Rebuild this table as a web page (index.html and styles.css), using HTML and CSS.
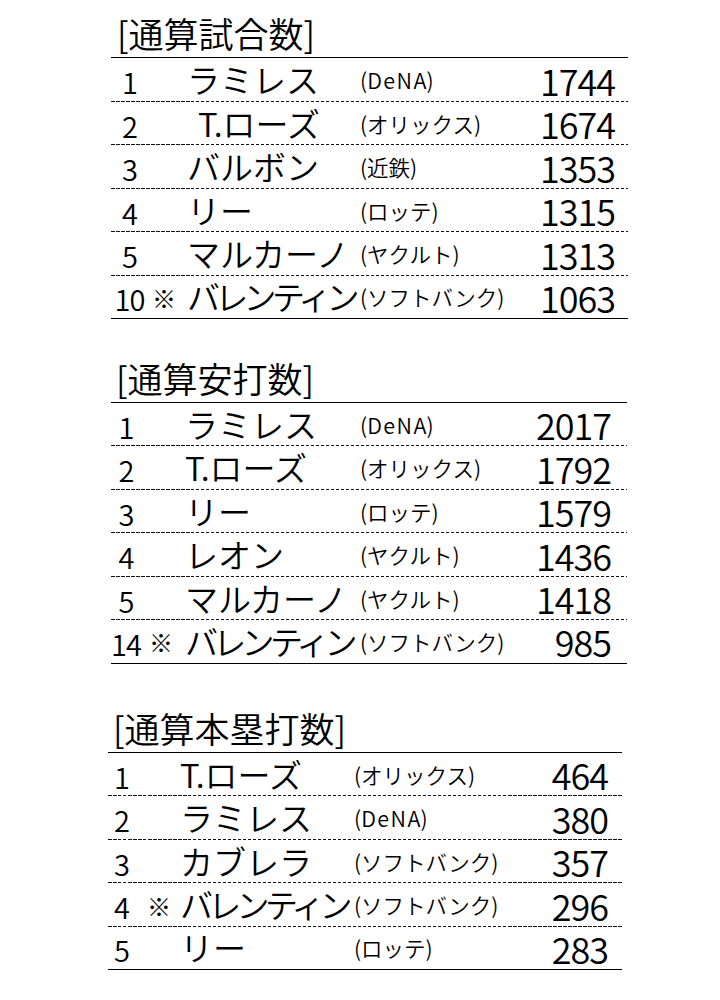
FILE: index.html
```html
<!DOCTYPE html>
<html lang="ja">
<head>
<meta charset="utf-8">
<title>通算記録</title>
<link rel="stylesheet" href="styles.css">
</head>
<body>
<main class="page">
  <section class="board s1">
    <h2 class="title">[通算試合数]</h2>
    <div class="row"><span class="rank">1</span><span class="mark"></span><span class="name">ラミレス</span><span class="team">(<span class="en">DeNA</span>)</span><span class="num">1744</span></div>
    <div class="row"><span class="rank">2</span><span class="mark"></span><span class="name indent">T.ローズ</span><span class="team">(オリックス)</span><span class="num">1674</span></div>
    <div class="row"><span class="rank">3</span><span class="mark"></span><span class="name">バルボン</span><span class="team">(近鉄)</span><span class="num">1353</span></div>
    <div class="row"><span class="rank">4</span><span class="mark"></span><span class="name">リー</span><span class="team">(ロッテ)</span><span class="num">1315</span></div>
    <div class="row"><span class="rank">5</span><span class="mark"></span><span class="name">マルカーノ</span><span class="team">(ヤクルト)</span><span class="num">1313</span></div>
    <div class="row last"><span class="rank">10</span><span class="mark">※</span><span class="name squeeze">バレンティン</span><span class="team">(ソフトバンク)</span><span class="num">1063</span></div>
  </section>

  <section class="board s2">
    <h2 class="title">[通算安打数]</h2>
    <div class="row"><span class="rank">1</span><span class="mark"></span><span class="name">ラミレス</span><span class="team">(<span class="en">DeNA</span>)</span><span class="num">2017</span></div>
    <div class="row"><span class="rank">2</span><span class="mark"></span><span class="name">T.ローズ</span><span class="team">(オリックス)</span><span class="num">1792</span></div>
    <div class="row"><span class="rank">3</span><span class="mark"></span><span class="name">リー</span><span class="team">(ロッテ)</span><span class="num">1579</span></div>
    <div class="row"><span class="rank">4</span><span class="mark"></span><span class="name">レオン</span><span class="team">(ヤクルト)</span><span class="num">1436</span></div>
    <div class="row"><span class="rank">5</span><span class="mark"></span><span class="name">マルカーノ</span><span class="team">(ヤクルト)</span><span class="num">1418</span></div>
    <div class="row last"><span class="rank">14</span><span class="mark">※</span><span class="name squeeze">バレンティン</span><span class="team">(ソフトバンク)</span><span class="num">985</span></div>
  </section>

  <section class="board s3">
    <h2 class="title">[通算本塁打数]</h2>
    <div class="row"><span class="rank">1</span><span class="mark"></span><span class="name">T.ローズ</span><span class="team">(オリックス)</span><span class="num">464</span></div>
    <div class="row"><span class="rank">2</span><span class="mark"></span><span class="name">ラミレス</span><span class="team">(<span class="en">DeNA</span>)</span><span class="num">380</span></div>
    <div class="row"><span class="rank">3</span><span class="mark"></span><span class="name">カブレラ</span><span class="team">(ソフトバンク)</span><span class="num">357</span></div>
    <div class="row"><span class="rank">4</span><span class="mark">※</span><span class="name squeeze">バレンティン</span><span class="team">(ソフトバンク)</span><span class="num">296</span></div>
    <div class="row last"><span class="rank">5</span><span class="mark"></span><span class="name">リー</span><span class="team">(ロッテ)</span><span class="num">283</span></div>
  </section>
</main>
</body>
</html>
```

FILE: styles.css
```css
html, body {
  margin: 0;
  padding: 0;
  background: #fff;
}

body {
  font-family: "Noto Sans CJK JP", "Noto Sans", sans-serif;
  font-weight: 350;
  color: #000;
}

.page {
  padding-top: 16px;
  display: flex;
  flex-direction: column;
}

.board {
  display: flex;
  flex-direction: column;
}

.s1 {
  margin-left: 111px;
  width: 517px;
  --rank: 37px;
  --mark: 39px;
  --mp: 4px;
  --name: 173px;
  --pr: 13px;
  --tl: 6px;
}

.s2 {
  margin-left: 111px;
  width: 516px;
  margin-top: 41.5px;
  --rank: 30px;
  --mark: 44px;
  --mp: 8px;
  --name: 175px;
  --pr: 16px;
  --tl: 5px;
}

.s3 {
  margin-left: 108px;
  width: 514px;
  margin-top: 47px;
  --rank: 27px;
  --mark: 45px;
  --mp: 12px;
  --name: 174px;
  --pr: 14px;
  --tl: 5px;
}

.title {
  margin: 0;
  padding: 0 0 7px var(--tl);
  font-size: 35px;
  line-height: 34px;
  height: 34px;
  font-weight: 350;
  border-bottom: 1.5px solid #000;
  white-space: nowrap;
}

.row {
  display: grid;
  grid-template-columns: var(--rank) var(--mark) var(--name) 1fr auto;
  align-items: center;
  height: 43.5px;
  box-sizing: border-box;
  padding-right: var(--pr);
  background-image: repeating-linear-gradient(to right, #111 0 3.5px, transparent 3.5px 5px);
  background-size: 100% 1px;
  background-position: left bottom;
  background-repeat: no-repeat;
  white-space: nowrap;
}

.row.last {
  background-image: none;
  border-bottom: 1.5px solid #000;
}

.rank {
  font-size: 29px;
  line-height: 1;
  letter-spacing: -1px;
  text-align: center;
  padding-top: 4px;
}

.mark {
  font-size: 24px;
  line-height: 1;
  padding-left: var(--mp);
  padding-top: 2px;
}

.name {
  font-size: 33px;
  line-height: 1;
}

.name.indent {
  padding-left: 11px;
}

.name.squeeze {
  letter-spacing: -4.7px;
}

.team {
  font-size: 21.5px;
  line-height: 1;
}

.en {
  letter-spacing: 1.5px;
  margin-right: -1.5px;
}

.num {
  font-size: 36px;
  line-height: 1;
  letter-spacing: -1px;
  text-align: right;
}
```
